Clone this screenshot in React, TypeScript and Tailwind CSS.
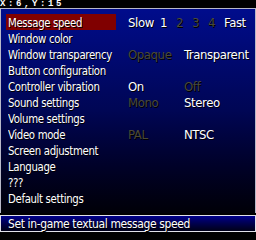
const rows: { label: string; opts?: { text: string; at: number; on: boolean }[] }[] = [
  {
    label: 'Message speed',
    opts: [
      { text: 'Slow', at: 0, on: true },
      { text: '1', at: 32, on: true },
      { text: '2', at: 48, on: false },
      { text: '3', at: 64, on: false },
      { text: '4', at: 80, on: false },
      { text: 'Fast', at: 96, on: true },
    ],
  },
  { label: 'Window color' },
  {
    label: 'Window transparency',
    opts: [
      { text: 'Opaque', at: 0, on: false },
      { text: 'Transparent', at: 56, on: true },
    ],
  },
  { label: 'Button configuration' },
  {
    label: 'Controller vibration',
    opts: [
      { text: 'On', at: 0, on: true },
      { text: 'Off', at: 56, on: false },
    ],
  },
  {
    label: 'Sound settings',
    opts: [
      { text: 'Mono', at: 0, on: false },
      { text: 'Stereo', at: 56, on: true },
    ],
  },
  { label: 'Volume settings' },
  {
    label: 'Video mode',
    opts: [
      { text: 'PAL', at: 0, on: false },
      { text: 'NTSC', at: 56, on: true },
    ],
  },
  { label: 'Screen adjustment' },
  { label: 'Language' },
  { label: '???' },
  { label: 'Default settings' },
]

const font = "font-['DejaVu_Sans_Condensed','DejaVu_Sans',sans-serif]"

export default function App() {
  return (
    <div className={`w-[256px] h-[240px] bg-black flex flex-col overflow-hidden ${font}`}>
      {/* status line */}
      <div className="h-[8px] text-white text-[9px] leading-[8px] font-bold tracking-[2.6px] font-['Liberation_Mono',monospace]">
        X:6,Y:15
      </div>

      {/* options panel */}
      <div className="h-[205px] border-t border-x border-[#b8b8c8] bg-gradient-to-b from-[#000c8c] via-[#000654] to-[#000008] pt-[5px] pl-[5px]">
        {rows.map((r, i) => (
          <div key={r.label} className="flex h-[16px]">
            <div className={`w-[110px] h-[16px] pl-[2px] pt-[1px] ${i === 0 ? 'bg-[#800000]' : ''}`}>
              <div className="origin-left scale-x-[0.87] text-[13px] leading-[16px] tracking-[-0.4px] text-white whitespace-nowrap [text-shadow:1px_1px_0_#000]">
                {r.label}
              </div>
            </div>
            <div className="relative ml-[12px] h-[16px] flex-1">
              {r.opts?.map((o) => (
                <span
                  key={o.text}
                  className={`absolute top-[1px] text-[13px] leading-[16px] tracking-[-0.4px] whitespace-nowrap [text-shadow:1px_1px_0_#000] ${
                    o.on ? 'text-white' : 'text-[#4a4a36]'
                  }`}
                  style={{ left: o.at }}
                >
                  {o.text}
                </span>
              ))}
            </div>
          </div>
        ))}
      </div>

      {/* help line */}
      <div className="mt-[2px] h-[17px] border border-[#e0e0e8] bg-gradient-to-b from-[#00008c] to-[#000018] pl-[7px]">
        <div className="origin-left scale-x-[0.92] text-[13px] leading-[15px] tracking-[-0.4px] text-white whitespace-nowrap [text-shadow:1px_1px_0_#000]">
          Set in-game textual message speed
        </div>
      </div>
    </div>
  )
}
